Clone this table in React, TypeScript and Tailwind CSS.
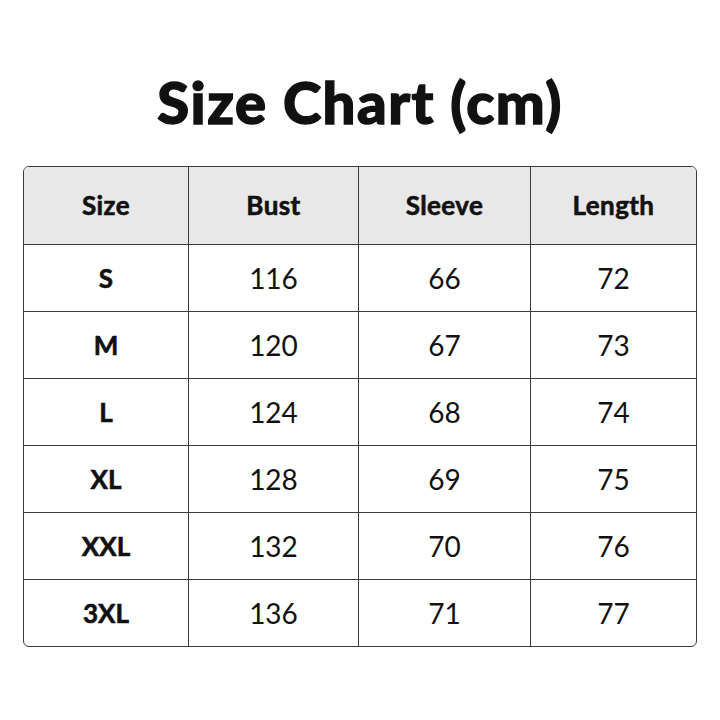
const headers = ['Size', 'Bust', 'Sleeve', 'Length'];

const rows: [string, number, number, number][] = [
  ['S', 116, 66, 72],
  ['M', 120, 67, 73],
  ['L', 124, 68, 74],
  ['XL', 128, 69, 75],
  ['XXL', 132, 70, 76],
  ['3XL', 136, 71, 77],
];

const cols = 'grid grid-cols-[164px_170px_172px_166px]';

export default function App() {
  return (
    <div
      className="flex h-[720px] w-[720px] flex-col items-center bg-white text-[#111]"
      style={{ fontFamily: 'Lato, "Open Sans", sans-serif' }}
    >
      <h1 className="mt-[66px] text-[58px] font-black leading-[72px] tracking-[1.5px] [-webkit-text-stroke:1.4px_#111]">
        Size Chart (cm)
      </h1>
      <div className="mt-[28px] w-[674px] overflow-hidden rounded-[6px] border-[1.5px] border-[#3a3a3a]">
        <div className={`${cols} h-[77px] bg-[#e8e8e8]`}>
          {headers.map((h, i) => (
            <div
              key={h}
              className={`flex items-center justify-center text-[26px] font-bold tracking-[0.4px] [-webkit-text-stroke:0.6px_#111] ${
                i > 0 ? 'border-l-[1.5px] border-[#3a3a3a]' : ''
              }`}
            >
              {h}
            </div>
          ))}
        </div>
        {rows.map((r) => (
          <div key={r[0]} className={`${cols} h-[67px] border-t-[1.5px] border-[#3a3a3a]`}>
            {r.map((v, i) => (
              <div
                key={i}
                className={`flex items-center justify-center ${
                  i === 0
                    ? 'text-[26px] font-bold [-webkit-text-stroke:0.6px_#111]'
                    : 'border-l-[1.5px] border-[#3a3a3a] text-[28px]'
                }`}
              >
                {v}
              </div>
            ))}
          </div>
        ))}
      </div>
    </div>
  );
}
